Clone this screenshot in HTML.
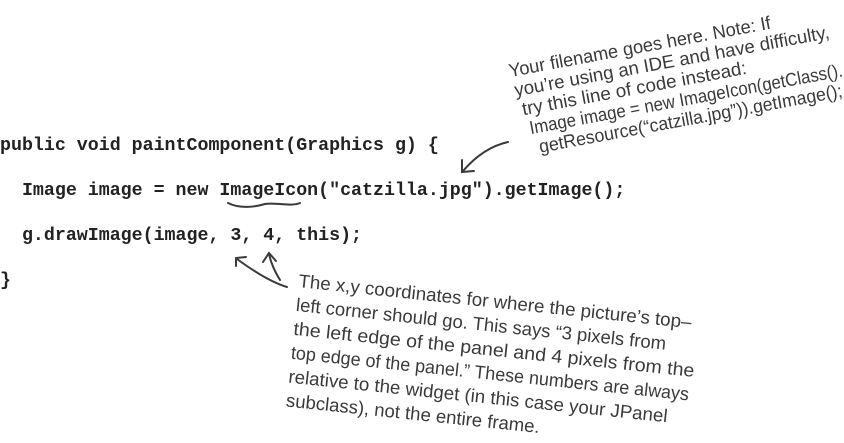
<!DOCTYPE html>
<html><head><meta charset="utf-8"><style>
html,body{margin:0;padding:0;background:#fff;width:844px;height:443px;overflow:hidden}
.code{position:absolute;left:0;font:bold 18.3px "Liberation Mono",monospace;color:#222;white-space:pre;line-height:20px}
svg{position:absolute;left:0;top:0}
.h{font-family:"Liberation Sans Narrow","Liberation Sans",sans-serif;font-size:18.5px;fill:#3a3a3a}
</style></head><body>
<div class="code" style="top:136px">public void paintComponent(Graphics g) {</div>
<div class="code" style="top:181px">  Image image = new ImageIcon("catzilla.jpg").getImage();</div>
<div class="code" style="top:226px">  g.drawImage(image, 3, 4, this);</div>
<div class="code" style="top:271px">}</div>
<svg width="844" height="443" viewBox="0 0 844 443">
<g transform="translate(510,77) rotate(-10.5)" class="h">
<text x="0" y="0" textLength="266" lengthAdjust="spacingAndGlyphs">Your filename goes here. Note: If</text>
<text x="2" y="20" textLength="320" lengthAdjust="spacingAndGlyphs">you’re using an IDE and have difficulty,</text>
<text x="6" y="40" textLength="228" lengthAdjust="spacingAndGlyphs">try this line of code instead:</text>
<text x="10" y="60" textLength="318" lengthAdjust="spacingAndGlyphs">Image image = new ImageIcon(getClass().</text>
<text x="16" y="80" textLength="308" lengthAdjust="spacingAndGlyphs">getResource(“catzilla.jpg”)).getImage();</text>
</g>
<g transform="translate(298,287) rotate(6)" class="h">
<text x="0" y="0" textLength="395" lengthAdjust="spacingAndGlyphs">The x,y coordinates for where the picture’s top–</text>
<text x="0" y="24" textLength="372" lengthAdjust="spacingAndGlyphs">left corner should go. This says “3 pixels from</text>
<text x="0" y="48" textLength="403" lengthAdjust="spacingAndGlyphs">the left edge of the panel and 4 pixels from the</text>
<text x="0" y="72" textLength="400" lengthAdjust="spacingAndGlyphs">top edge of the panel.” These numbers are always</text>
<text x="0" y="96" textLength="381" lengthAdjust="spacingAndGlyphs">relative to the widget (in this case your JPanel</text>
<text x="0" y="120" textLength="255" lengthAdjust="spacingAndGlyphs">subclass), not the entire frame.</text>
</g>
<g fill="none" stroke="#3a3a3a" stroke-width="2" stroke-linecap="round">
<path d="M508,142 C490,146 475,157 463,171"/>
<path d="M462,160 L462,172 L474,171"/>
<path d="M228,203 C240,209 255,207 265,204 C275,202 290,207 300,203"/>
<path d="M287,287 C270,282 252,270 237,259"/>
<path d="M236,266 L236,258 L246,257"/>
<path d="M280,280 C275,272 271,263 269,254"/>
<path d="M263,262 L269,253 L276,261"/>
</g>
</svg>
</body></html>
